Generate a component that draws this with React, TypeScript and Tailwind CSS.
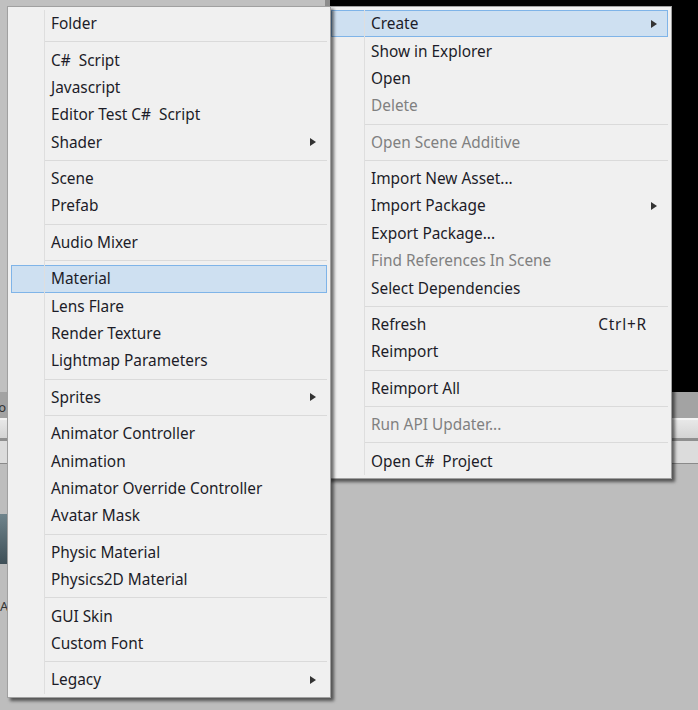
import React from 'react';

type Item = {
  label?: string;
  sep?: boolean;
  arrow?: boolean;
  disabled?: boolean;
  active?: boolean;
  shortcut?: string;
};

const createItems: Item[] = [
  { label: 'Folder' },
  { sep: true },
  { label: 'C# Script' },
  { label: 'Javascript' },
  { label: 'Editor Test C# Script' },
  { label: 'Shader', arrow: true },
  { sep: true },
  { label: 'Scene' },
  { label: 'Prefab' },
  { sep: true },
  { label: 'Audio Mixer' },
  { sep: true },
  { label: 'Material', active: true },
  { label: 'Lens Flare' },
  { label: 'Render Texture' },
  { label: 'Lightmap Parameters' },
  { sep: true },
  { label: 'Sprites', arrow: true },
  { sep: true },
  { label: 'Animator Controller' },
  { label: 'Animation' },
  { label: 'Animator Override Controller' },
  { label: 'Avatar Mask' },
  { sep: true },
  { label: 'Physic Material' },
  { label: 'Physics2D Material' },
  { sep: true },
  { label: 'GUI Skin' },
  { label: 'Custom Font' },
  { sep: true },
  { label: 'Legacy', arrow: true },
];

const assetItems: Item[] = [
  { label: 'Create', arrow: true, active: true },
  { label: 'Show in Explorer' },
  { label: 'Open' },
  { label: 'Delete', disabled: true },
  { sep: true },
  { label: 'Open Scene Additive', disabled: true },
  { sep: true },
  { label: 'Import New Asset...' },
  { label: 'Import Package', arrow: true },
  { label: 'Export Package...' },
  { label: 'Find References In Scene', disabled: true },
  { label: 'Select Dependencies' },
  { sep: true },
  { label: 'Refresh', shortcut: 'Ctrl+R' },
  { label: 'Reimport' },
  { sep: true },
  { label: 'Reimport All' },
  { sep: true },
  { label: 'Run API Updater...', disabled: true },
  { sep: true },
  { label: 'Open C# Project' },
];

// the # in the original font is wider than in ours
function Label({ text }: { text: string }) {
  const parts = text.split('#');
  if (parts.length === 1) return <>{text}</>;
  return (
    <>
      {parts[0]}
      <span className="pr-[4px]">#</span>
      {parts[1]}
    </>
  );
}

function MenuRow({ item }: { item: Item }) {
  if (item.sep) {
    return (
      <div className="flex h-[9px] items-center pl-[34px]">
        <div className="h-[1px] w-full bg-[#dadada]" />
      </div>
    );
  }
  return (
    <div
      className={
        'flex h-[27.4px] items-center border pl-[39px] pr-[10px] ' +
        (item.active ? 'border-[#7fb4e8] bg-[#399cfb]/18 ' : 'border-transparent ') +
        (item.disabled ? 'text-[#808080]' : 'text-[#1c1c28]')
      }
    >
      <span className="flex-1 whitespace-nowrap">
        <Label text={item.label ?? ''} />
      </span>
      {item.shortcut && <span className="mr-[10px] tracking-[0.8px]">{item.shortcut}</span>}
      {item.arrow && (
        <span className="h-0 w-0 border-y-[4px] border-l-[6px] border-y-transparent border-l-[#333333]" />
      )}
    </div>
  );
}

function Menu({ items, className }: { items: Item[]; className: string }) {
  return (
    <div
      className={
        "absolute top-[6px] border border-[#a0a0a0] bg-[#f0f0f0] p-[3px] font-['Noto_Sans','Open_Sans',sans-serif] text-[15.4px] shadow-[3px_3px_3px_rgba(0,0,0,0.55)] " +
        className
      }
    >
      <div className="relative">
        <div className="absolute bottom-0 left-[33px] top-0 w-[1px] bg-[#dedede]" />
        {items.map((item, i) => (
          <MenuRow key={i} item={item} />
        ))}
      </div>
    </div>
  );
}

export default function App() {
  return (
    <div className="relative flex h-[710px] w-[698px] flex-col overflow-hidden bg-[#bdbdbd] font-['Noto_Sans',sans-serif] text-[13px] text-[#333333]">
      {/* editor window behind the menus */}
      <div className="flex h-[392px]">
        <div className="flex-1 bg-[#c0c0c0]" />
        <div className="w-[5px] bg-[#8c8c8c]" />
        <div className="w-[368px] bg-black" />
      </div>
      <div className="flex h-[26px] items-end bg-[#a3a3a3] leading-[22px]">
        <span className="flex w-[6px] justify-end overflow-hidden">o</span>
      </div>
      <div className="h-[2px] bg-[#f4f4f4]" />
      <div className="h-[18px] bg-gradient-to-b from-[#e8e8e8] to-[#d4d4d4]" />
      <div className="h-[3px] bg-[#8f8f8f]" />
      <div className="h-[22px] bg-[#dcdcdc]" />
      <div className="h-[1px] bg-[#8a8a8a]" />
      <div className="h-[50px]" />
      {/* asset thumbnail, mostly hidden by the menu */}
      <div className="h-[50px] w-[60px] bg-gradient-to-b from-[#6f848c] to-[#3f5058]" />
      <div className="pt-[34px] leading-[16px]">Assets</div>
      <Menu items={assetItems} className="left-[327px] w-[345px]" />
      <Menu items={createItems} className="left-[7px] w-[324px]" />
    </div>
  );
}
